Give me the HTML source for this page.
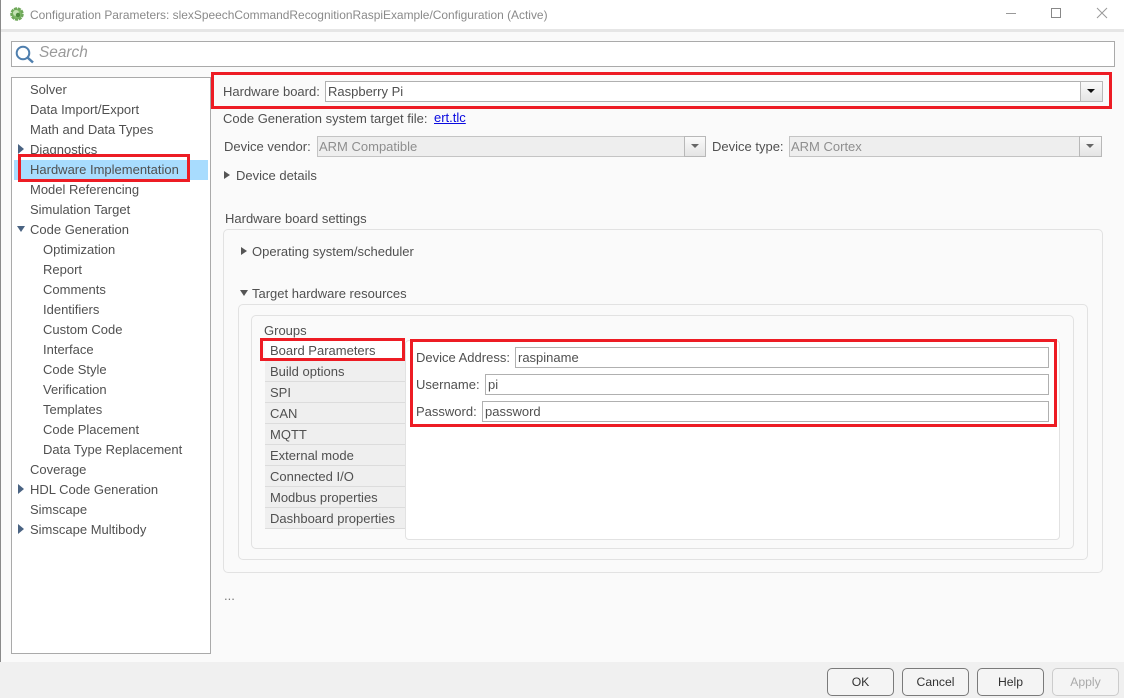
<!DOCTYPE html>
<html><head><meta charset="utf-8">
<style>
html,body{margin:0;padding:0;width:1124px;height:698px;overflow:hidden;background:#fafafa;font-family:"Liberation Sans",sans-serif;font-size:13px;color:#505050}
div,span,a{position:absolute;box-sizing:border-box}
.t{line-height:22px;white-space:nowrap;height:22px}
.g{color:#8e8e8e}
.i{background:#fff;border:1px solid #b0b0b0}
.d{background:#eee;border:1px solid #c4c4c4}
.btn{background:linear-gradient(#fafafa,#e4e4e4);border:1px solid #b8b8b8}
.red{border:3px solid #ed1c24}
.p{border:1px solid #e2e2e2;border-radius:5px}
.b{top:668px;width:67px;height:28px;border:1px solid #7a7a7a;border-radius:5px;background:#f4f4f4;text-align:center;line-height:27px;font-size:12.2px;color:#333}
.li{left:265px;width:140px;height:21px;background:#efefef;border-bottom:1px solid #dcdcdc;padding-left:5px;line-height:22px;white-space:nowrap}
</style></head>
<body>
<div style="left:0;top:0;width:1124px;height:29px;background:#fff"></div>
<div style="left:0;top:29px;width:1124px;height:3px;background:#e6e6e6"></div>
<div style="left:0;top:0;width:1px;height:698px;background:#8a8a8a"></div>
<svg style="position:absolute;left:9px;top:6px" width="16" height="16" viewBox="0 0 16 16"><circle cx="8" cy="8" r="5.500" fill="#7fb968" stroke="#6fa85a" stroke-width="2.500" stroke-dasharray="3 0.800"/><circle cx="7" cy="7" r="3" fill="#c5e2b4"/><circle cx="9" cy="9" r="2.200" fill="#4d8a3c"/></svg>
<span class="t" style="left:30px;top:4px;font-size:11.95px;color:#8a8a8a">Configuration Parameters: slexSpeechCommandRecognitionRaspiExample/Configuration (Active)</span>
<svg style="position:absolute;left:1000px;top:5px" width="115" height="16"><path d="M6 8.500H16" stroke="#999" fill="none"/><rect x="51.500" y="3.500" width="9" height="9" stroke="#888" fill="none"/><path d="M97 3L107 13M107 3L97 13" stroke="#999" fill="none"/></svg>

<div class="i" style="left:11px;top:41px;width:1104px;height:26px;border-color:#aaa"></div>
<svg style="position:absolute;left:15px;top:45px" width="20" height="19" viewBox="0 0 20 19"><circle cx="8" cy="8" r="6.300" fill="none" stroke="#4f7fae" stroke-width="2"/><path d="M12.500 12.500L18 17.500" stroke="#4f7fae" stroke-width="2.500" fill="none"/></svg>
<span class="t" style="left:39px;top:42px;font-size:15.400px;font-style:italic;color:#9a9a9a">Search</span>

<div style="left:11px;top:77px;width:200px;height:577px;background:#fff;border:1px solid #aaa"></div>
<div style="left:14px;top:160px;width:194px;height:20px;background:#a8dcfe"></div>
<span class="t" style="left:30px;top:79px">Solver</span>
<span class="t" style="left:30px;top:99px">Data Import/Export</span>
<span class="t" style="left:30px;top:119px">Math and Data Types</span>
<span class="t" style="left:30px;top:139px">Diagnostics</span>
<span class="t" style="left:30px;top:159px">Hardware Implementation</span>
<span class="t" style="left:30px;top:179px">Model Referencing</span>
<span class="t" style="left:30px;top:199px">Simulation Target</span>
<span class="t" style="left:30px;top:219px">Code Generation</span>
<span class="t" style="left:43px;top:239px">Optimization</span>
<span class="t" style="left:43px;top:259px">Report</span>
<span class="t" style="left:43px;top:279px">Comments</span>
<span class="t" style="left:43px;top:299px">Identifiers</span>
<span class="t" style="left:43px;top:319px">Custom Code</span>
<span class="t" style="left:43px;top:339px">Interface</span>
<span class="t" style="left:43px;top:359px">Code Style</span>
<span class="t" style="left:43px;top:379px">Verification</span>
<span class="t" style="left:43px;top:399px">Templates</span>
<span class="t" style="left:43px;top:419px">Code Placement</span>
<span class="t" style="left:43px;top:439px">Data Type Replacement</span>
<span class="t" style="left:30px;top:459px">Coverage</span>
<span class="t" style="left:30px;top:479px">HDL Code Generation</span>
<span class="t" style="left:30px;top:499px">Simscape</span>
<span class="t" style="left:30px;top:519px">Simscape Multibody</span>
<svg style="position:absolute;left:14px;top:140px" width="16" height="400" viewBox="0 0 16 400" fill="#4a6382"><path d="M4 4L10 9L4 14Z"/><path d="M3 86H11L7 92Z"/><path d="M4 344L10 349L4 354Z"/><path d="M4 384L10 389L4 394Z"/></svg>
<div class="red" style="left:18px;top:154px;width:172px;height:28px"></div>

<div class="red" style="left:211px;top:72px;width:901px;height:37px"></div>
<span class="t" style="left:223px;top:81px">Hardware board:</span>
<div class="i" style="left:325px;top:81px;width:778px;height:21px"></div>
<span class="t" style="left:328px;top:81px">Raspberry Pi</span>
<div class="btn" style="left:1080px;top:81px;width:23px;height:21px"></div>
<svg style="position:absolute;left:1086px;top:88px" width="12" height="8"><path d="M1 1H9L5 5Z" fill="#111"/></svg>

<span class="t" style="left:223px;top:108px">Code Generation system target file:</span>
<a class="t" style="left:434px;top:107px;color:#0a0ae0;text-decoration:underline">ert.tlc</a>

<span class="t" style="left:224px;top:136px">Device vendor:</span>
<div class="d" style="left:317px;top:136px;width:389px;height:21px"></div>
<span class="t g" style="left:319px;top:136px">ARM Compatible</span>
<div class="btn" style="left:684px;top:136px;width:22px;height:21px"></div>
<svg style="position:absolute;left:690px;top:143px" width="12" height="8"><path d="M1 1H9L5 5Z" fill="#666"/></svg>
<span class="t" style="left:712px;top:136px">Device type:</span>
<div class="d" style="left:789px;top:136px;width:313px;height:21px"></div>
<span class="t g" style="left:791px;top:136px">ARM Cortex</span>
<div class="btn" style="left:1079px;top:136px;width:23px;height:21px"></div>
<svg style="position:absolute;left:1085px;top:143px" width="12" height="8"><path d="M1 1H9L5 5Z" fill="#666"/></svg>

<svg style="position:absolute;left:222px;top:168px" width="12" height="14"><path d="M2 3L8 7L2 11Z" fill="#555"/></svg>
<span class="t" style="left:236px;top:165px">Device details</span>

<span class="t" style="left:225px;top:208px">Hardware board settings</span>
<div class="p" style="left:223px;top:229px;width:880px;height:344px"></div>
<svg style="position:absolute;left:239px;top:244px" width="12" height="14"><path d="M2 3L8 7L2 11Z" fill="#555"/></svg>
<span class="t" style="left:252px;top:241px">Operating system/scheduler</span>
<svg style="position:absolute;left:239px;top:286px" width="12" height="14"><path d="M1 4H9L5 10Z" fill="#555"/></svg>
<span class="t" style="left:252px;top:283px">Target hardware resources</span>
<div class="p" style="left:238px;top:304px;width:850px;height:256px"></div>
<div class="p" style="left:251px;top:315px;width:823px;height:234px"></div>
<span class="t" style="left:264px;top:320px">Groups</span>

<div style="left:405px;top:340px;width:655px;height:200px;background:#fff;border:1px solid #e2e2e2;border-radius:4px"></div>
<div class="li" style="top:340px;background:#fff;border-bottom:0">Board Parameters</div>
<div class="li" style="top:361px">Build options</div>
<div class="li" style="top:382px">SPI</div>
<div class="li" style="top:403px">CAN</div>
<div class="li" style="top:424px">MQTT</div>
<div class="li" style="top:445px">External mode</div>
<div class="li" style="top:466px">Connected I/O</div>
<div class="li" style="top:487px">Modbus properties</div>
<div class="li" style="top:508px">Dashboard properties</div>
<div class="red" style="left:260px;top:338px;width:145px;height:23px"></div>

<span class="t" style="left:416px;top:347px">Device Address:</span>
<div class="i" style="left:515px;top:347px;width:534px;height:21px"></div>
<span class="t" style="left:518px;top:347px">raspiname</span>
<span class="t" style="left:416px;top:374px">Username:</span>
<div class="i" style="left:485px;top:374px;width:564px;height:21px"></div>
<span class="t" style="left:488px;top:374px">pi</span>
<span class="t" style="left:416px;top:401px">Password:</span>
<div class="i" style="left:482px;top:401px;width:567px;height:21px"></div>
<span class="t" style="left:485px;top:401px">password</span>
<div class="red" style="left:410px;top:339px;width:647px;height:88px"></div>

<span class="t" style="left:224px;top:585px;color:#777">...</span>

<div style="left:0;top:662px;width:1124px;height:36px;background:#f0f0f0"></div>
<div class="b" style="left:827px">OK</div>
<div class="b" style="left:902px">Cancel</div>
<div class="b" style="left:977px">Help</div>
<div class="b" style="left:1052px;border-color:#ccc;color:#aaa">Apply</div>
</body></html>
